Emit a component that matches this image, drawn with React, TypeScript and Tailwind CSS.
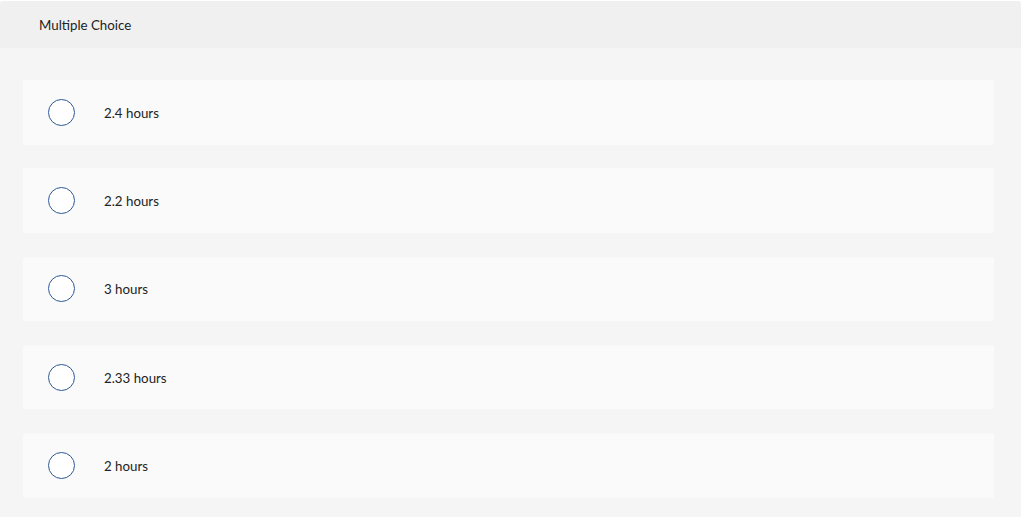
const options = ["2.4 hours", "2.2 hours", "3 hours", "2.33 hours", "2 hours"];

export default function App() {
  return (
    <div className="w-[1024px] h-[517px] bg-white pt-px font-['Lato','Open_Sans',sans-serif] text-[13.3px] text-[#222]">
      <div className="w-[1021px] h-[516px] rounded-t-[3px] overflow-hidden bg-[#f5f5f5] flex flex-col">
        {/* header */}
        <div className="h-[47px] shrink-0 bg-[#f0f0f0] flex items-center px-[39px] pt-[2px]">
          Multiple Choice
        </div>

        {/* options */}
        <div className="flex flex-col gap-[23.75px] pt-[32px] pl-[23px] pr-[27px]">
          {options.map((opt) => (
            <label
              key={opt}
              className="h-[64.5px] rounded-[3px] bg-[#fafafa] flex items-center pl-[25px] cursor-pointer"
            >
              <span className="w-[27px] h-[27px] rounded-full border-[1.5px] border-[#2d5a94] bg-white shrink-0" />
              <span className="ml-[29px] pt-[3px]">{opt}</span>
            </label>
          ))}
        </div>
      </div>
    </div>
  );
}
